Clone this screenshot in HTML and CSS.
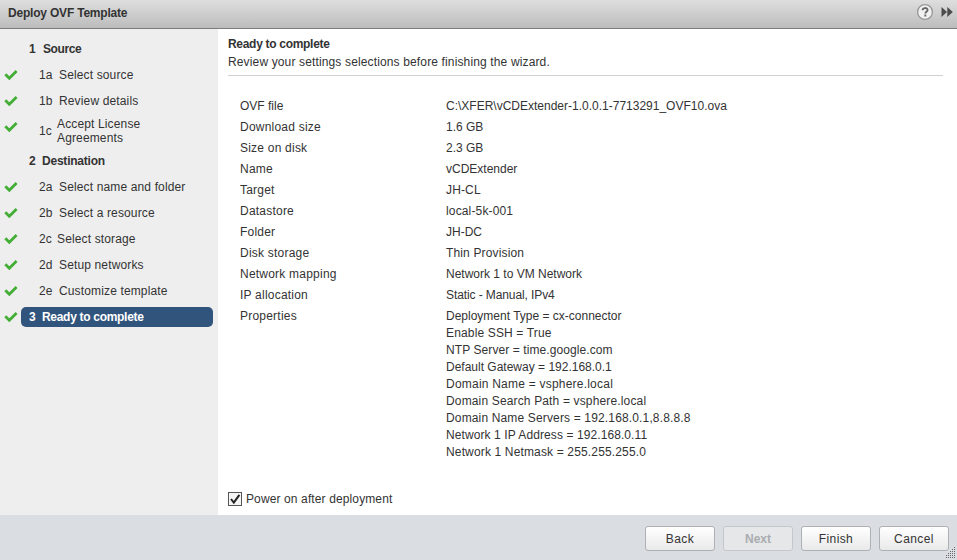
FILE: index.html
```html
<!DOCTYPE html>
<html lang="en">
<head>
<meta charset="utf-8">
<title>Deploy OVF Template</title>
<link rel="stylesheet" href="styles.css">
</head>
<body>
<svg class="defs" width="0" height="0"><defs>
<symbol id="tick" viewBox="0 0 14 12"><path d="M1.3 5.3 5.3 9.2 12.6 2" fill="none" stroke="#43ae35" stroke-width="2.8"/></symbol>
</defs></svg>
<div class="wizard">
  <header class="titlebar">
    <h1>Deploy OVF Template</h1>
    <svg class="help" width="18" height="18" viewBox="0 0 18 18"><circle cx="9" cy="9" r="7.4" fill="#f1f1f1" stroke="#969696" stroke-width="1.3"/><path d="M6.6 7.2C6.6 4.4 11.6 4.4 11.6 7C11.6 8.8 9.3 8.6 9.3 10.6M9.3 11.6V13.4" fill="none" stroke="#666" stroke-width="1.9"/></svg>
    <svg class="more" width="12" height="12" viewBox="0 0 12 12"><path d="M.5 1 6 6 .5 11ZM6.3 1 11.8 6 6.3 11Z" fill="#4b4b4b"/></svg>
  </header>
  <div class="body">
    <nav class="steps">
      <div class="step main"><span class="mark"></span><span class="pill"><span class="num wide">1</span><span class="label">Source</span></span></div>
      <div class="step"><svg class="mark"><use href="#tick"/></svg><span class="num">1a</span><span class="label">Select source</span></div>
      <div class="step"><svg class="mark"><use href="#tick"/></svg><span class="num">1b</span><span class="label">Review details</span></div>
      <div class="step tall"><svg class="mark"><use href="#tick"/></svg><span class="num narrow">1c</span><span class="label">Accept License<br>Agreements</span></div>
      <div class="step main"><span class="mark"></span><span class="pill"><span class="num">2</span><span class="label">Destination</span></span></div>
      <div class="step"><svg class="mark"><use href="#tick"/></svg><span class="num">2a</span><span class="label">Select name and folder</span></div>
      <div class="step"><svg class="mark"><use href="#tick"/></svg><span class="num">2b</span><span class="label">Select a resource</span></div>
      <div class="step"><svg class="mark"><use href="#tick"/></svg><span class="num narrow">2c</span><span class="label">Select storage</span></div>
      <div class="step"><svg class="mark"><use href="#tick"/></svg><span class="num">2d</span><span class="label">Setup networks</span></div>
      <div class="step"><svg class="mark"><use href="#tick"/></svg><span class="num">2e</span><span class="label">Customize template</span></div>
      <div class="step main current"><svg class="mark"><use href="#tick"/></svg><span class="pill"><span class="num">3</span><span class="label">Ready to complete</span></span></div>
    </nav>
    <main class="content">
      <div class="intro"><h2>Ready to complete</h2><p>Review your settings selections before finishing the wizard.</p></div>
      <dl class="summary">
        <dt class="tight">OVF file</dt><dd class="tight">C:\XFER\vCDExtender-1.0.0.1-7713291_OVF10.ova</dd>
        <dt>Download size</dt><dd class="tight">1.6 GB</dd>
        <dt>Size on disk</dt><dd class="tight">2.3 GB</dd>
        <dt>Name</dt><dd class="tight">vCDExtender</dd>
        <dt>Target</dt><dd>JH-CL</dd>
        <dt>Datastore</dt><dd>local-5k-001</dd>
        <dt>Folder</dt><dd class="tight">JH-DC</dd>
        <dt>Disk storage</dt><dd>Thin Provision</dd>
        <dt>Network mapping</dt><dd class="tight">Network 1 to VM Network</dd>
        <dt>IP allocation</dt><dd class="tighter">Static - Manual, IPv4</dd>
        <dt>Properties</dt><dd><div class="tight">Deployment Type = cx-connector</div><div>Enable SSH = True</div><div class="snug">NTP Server = time.google.com</div><div class="tight">Default Gateway = 192.168.0.1</div><div class="loose">Domain Name = vsphere.local</div><div>Domain Search Path = vsphere.local</div><div>Domain Name Servers = 192.168.0.1,8.8.8.8</div><div class="snug">Network 1 IP Address = 192.168.0.11</div><div>Network 1 Netmask = 255.255.255.0</div></dd>
      </dl>
      <label class="power"><svg width="14" height="14" viewBox="0 0 14 14"><rect x=".5" y=".5" width="13" height="13" fill="#f5f5f5" stroke="#555"/><path d="M3 7 5.8 10.5 11.4 2.8" fill="none" stroke="#222" stroke-width="2"/></svg><span>Power on after deployment</span></label>
    </main>
  </div>
  <footer class="actions">
    <button>Back</button><button class="off" disabled>Next</button><button>Finish</button><button>Cancel</button>
    <svg class="grip" width="11" height="11" viewBox="0 0 11 11"><path d="M9 .5h1M7 2.5h1m1 0h1M5 4.5h1m1 0h1m1 0h1M3 6.5h1m1 0h1m1 0h1m1 0h1M1 8.5h1m1 0h1m1 0h1m1 0h1m1 0h1M1 10.5h1m1 0h1m1 0h1m1 0h1m1 0h1" stroke="#666"/></svg>
  </footer>
</div>
</body>
</html>
```
FILE: styles.css
```css
* { box-sizing: border-box; }
body { margin: 0; font: 12px/14px "Liberation Sans", Arial, sans-serif; color: #333; }
h1, h2, p, dl, dd { margin: 0; font-size: 12px; }
.defs { position: absolute; }
.wizard { width: 957px; height: 560px; display: flex; flex-direction: column; overflow: hidden; }
.titlebar { height: 29px; display: flex; align-items: center; padding: 0 4px 4px 8px; background: linear-gradient(#dedede, #bcbcbc); border-bottom: 1px solid #7d7d7d; }
.titlebar h1 { flex: 1; padding-top: 1px; letter-spacing: -.2px; }
.more { margin-left: 7px; }
.body { flex: 1; display: flex; min-height: 0; }
.steps { width: 218px; padding-top: 7px; background: #eee; }
.step { display: flex; align-items: center; height: 26px; padding-left: 4px; letter-spacing: .14px; }
.step.tall { height: 34px; }
.mark { width: 14px; height: 12px; margin-right: 21px; flex: none; }
.tall .mark { align-self: flex-start; margin-top: 7px; }
.num { width: 20px; flex: none; }
.num.narrow { width: 18px; }
.main { font-weight: bold; letter-spacing: -.22px; }
.current { letter-spacing: -.3px; }
.main .mark { margin-right: 3px; }
.main .num { width: 13px; }
.main .num.wide { width: 14px; }
.main:first-child { letter-spacing: -.4px; }
.pill { display: flex; align-items: center; width: 192px; height: 20px; padding-left: 8px; border-radius: 5px; }
.current .pill { background: #31547c; color: #fff; }
.content { flex: 1; padding: 8px 14px 0 10px; background: #fff; }
.intro { height: 39px; border-bottom: 1px solid #d0d0d0; letter-spacing: .14px; }
.intro h2 { letter-spacing: -.3px; }
.intro p { margin-top: 4px; }
.summary { display: grid; grid-template-columns: 206px 1fr; margin: 20px 0 0 12px; line-height: 17px; letter-spacing: .15px; }
.summary dt, .summary dd { padding: 2px 0; }
.summary dt { letter-spacing: .22px; }
.summary .loose { letter-spacing: .22px; }
.summary .snug { letter-spacing: .09px; }
.summary .tight { letter-spacing: 0; }
.summary .tighter { letter-spacing: -.1px; }
.power { display: flex; align-items: center; gap: 4px; margin-top: 29px; letter-spacing: .12px; }
.actions { position: relative; height: 45px; display: flex; justify-content: flex-end; gap: 8px; padding: 11px 8px 0; background: #dadde2; }
.actions button { width: 70px; height: 25px; padding: 0; border: 1px solid #aeb0b3; border-radius: 3px; background: linear-gradient(#fff, #e9e9e9); color: #333; font: 12px "Liberation Sans", Arial, sans-serif; letter-spacing: .4px; }
.actions .off { border-color: #c5c8cb; background: #e5e7e9; color: #aaacb0; font-weight: bold; letter-spacing: 0; }
.grip { position: absolute; right: 1px; bottom: 2px; }
```
